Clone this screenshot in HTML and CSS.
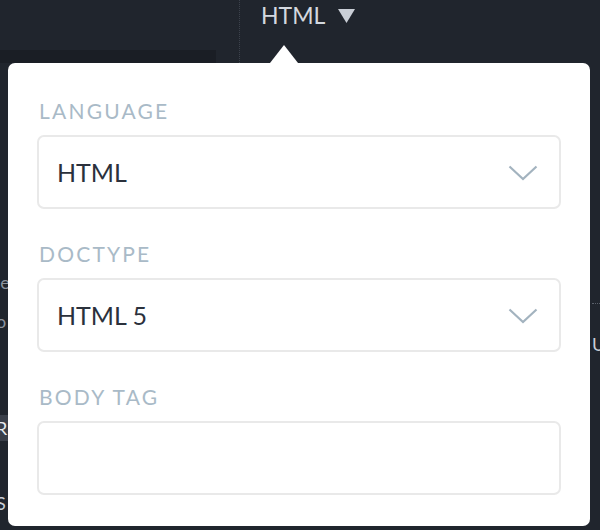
FILE: index.html
```html
<!DOCTYPE html>
<html lang="en">
<head>
<meta charset="utf-8">
<title>HTML settings</title>
<link rel="stylesheet" href="styles.css">
</head>
<body>
<div class="app">
  <header class="topbar">
    <div class="topbar-left"><div class="band"></div></div>
    <div class="topbar-title">
      <span class="title-text">HTML</span>
      <svg class="title-caret" width="17" height="14" viewBox="0 0 17 14"><polygon points="0,0 17,0 8.5,14" fill="#c9ced6"/></svg>
    </div>
  </header>
  <div class="workspace">
    <div class="edge edge-left">
      <span class="frag frag-e">le</span>
      <span class="frag frag-o">o</span>
      <span class="frag frag-r">R</span>
      <span class="frag frag-s">S</span>
    </div>
    <div class="edge edge-right">
      <span class="dots"></span>
      <span class="frag frag-u">U</span>
    </div>
  </div>

  <div class="popover">
    <div class="field">
      <div class="label">LANGUAGE</div>
      <div class="select">
        <span class="value">HTML</span>
        <svg class="chev" width="30" height="16" viewBox="0 0 30 16"><polyline points="1.5,1.5 15,14 28.5,1.5" fill="none" stroke="#a3b3bf" stroke-width="2.2"/></svg>
      </div>
    </div>
    <div class="field">
      <div class="label">DOCTYPE</div>
      <div class="select">
        <span class="value">HTML 5</span>
        <svg class="chev" width="30" height="16" viewBox="0 0 30 16"><polyline points="1.5,1.5 15,14 28.5,1.5" fill="none" stroke="#a3b3bf" stroke-width="2.2"/></svg>
      </div>
    </div>
    <div class="field">
      <div class="label">BODY TAG</div>
      <div class="select input"></div>
    </div>
  </div>
</div>
</body>
</html>
```

FILE: styles.css
```css
* { box-sizing: border-box; }
html, body { margin: 0; padding: 0; }
body {
  width: 600px;
  height: 530px;
  overflow: hidden;
  background: #20252d;
  font-family: Lato, "Open Sans", sans-serif;
}
.app {
  position: relative;
  width: 600px;
  height: 530px;
}
.topbar {
  display: flex;
  height: 63px;
}
.topbar-left {
  width: 240px;
  border-right: 1px dotted #3c424c;
  display: flex;
  flex-direction: column;
  justify-content: flex-end;
}
.band {
  width: 216px;
  height: 13px;
  background: #1a1e25;
}
.topbar-title {
  display: flex;
  align-items: flex-start;
  padding-left: 21px;
  padding-top: 1px;
  gap: 13px;
}
.title-text {
  color: #d3d8df;
  font-size: 23px;
  line-height: 28px;
}
.title-caret { margin-top: 8px; }

.workspace {
  display: flex;
  justify-content: space-between;
  height: 467px;
}
.edge {
  width: 10px;
  overflow: hidden;
  position: relative;
  display: flex;
  flex-direction: column;
}
.frag {
  font-size: 18px;
  line-height: 20px;
  color: #8d949e;
  white-space: nowrap;
}
.edge-left .frag { margin-left: -4px; }
.frag-e { margin-top: 209px; }
.frag-o { margin-top: 19px; }
.frag-r {
  margin-top: 84px;
  color: #e8ebef;
  background: #3a3f49;
  padding: 3px 0;
  width: 20px;
}
.frag-s { margin-top: 52px; color: #c9ced6; }
.edge-right { align-items: flex-start; padding-left: 2px; }
.dots {
  margin-top: 240px;
  width: 8px;
  border-top: 1px dotted #5a606a;
}
.frag-u { margin-top: 30px; color: #c9ced6; margin-left: 0; }

.popover {
  position: absolute;
  left: 8px;
  top: 63px;
  width: 582px;
  height: 463px;
  background: #ffffff;
  border-radius: 7px;
  padding: 36px 29px 0 29px;
  display: flex;
  flex-direction: column;
  gap: 33px;
}
.popover::before {
  content: "";
  position: absolute;
  top: -18px;
  left: 262px;
  border-left: 14px solid transparent;
  border-right: 14px solid transparent;
  border-bottom: 18px solid #ffffff;
}
.field {
  display: flex;
  flex-direction: column;
  gap: 12px;
}
.label {
  font-size: 21px;
  line-height: 24px;
  letter-spacing: 2.2px;
  color: #a9bac7;
  padding-left: 2px;
}
.select {
  height: 74px;
  border: 2px solid #e9e9e9;
  border-radius: 7px;
  display: flex;
  align-items: center;
  justify-content: space-between;
  padding: 0 21px 0 18px;
}
.value {
  font-size: 25px;
  color: #2b313c;
  line-height: 30px;
}
.chev { margin-top: 1px; }
```
